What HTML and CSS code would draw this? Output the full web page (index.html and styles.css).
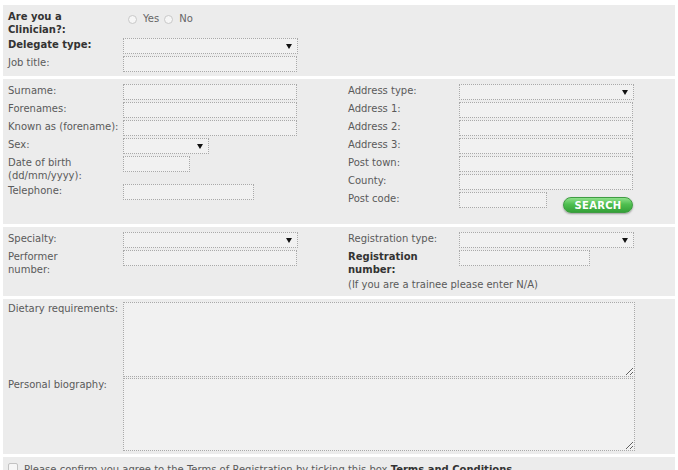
FILE: index.html
```html
<!DOCTYPE html>
<html lang="en">
<head>
    <meta charset="UTF-8">
    <meta name="viewport" content="width=device-width, initial-scale=1.0">
    <title>Delegate Registration</title>
    <link rel="stylesheet" href="styles.css">
</head>
<body>
    <form class="reg-form" id="registrationForm">

        <div class="panel panel-first">
            <div class="row">
                <span class="lbl strong">Are you a<br>Clinician?:</span>
                <div class="radios">
                    <input type="radio" name="clinician" id="clinYes" value="yes">
                    <label for="clinYes">Yes</label>
                    <input type="radio" name="clinician" id="clinNo" value="no">
                    <label for="clinNo">No</label>
                </div>
            </div>
            <div class="row">
                <label class="lbl strong" for="delegateType">Delegate type:</label>
                <span class="select-wrap w-sel"><select id="delegateType" name="delegateType"><option value=""></option></select></span>
            </div>
            <div class="row">
                <label class="lbl" for="jobTitle">Job title:</label>
                <input type="text" class="w-text" id="jobTitle" name="jobTitle">
            </div>
        </div>

        <div class="panel panel-split panel-person">
            <div class="col">
                <div class="row">
                    <label class="lbl" for="surname">Surname:</label>
                    <input type="text" class="w-text" id="surname" name="surname">
                </div>
                <div class="row">
                    <label class="lbl" for="forenames">Forenames:</label>
                    <input type="text" class="w-text" id="forenames" name="forenames">
                </div>
                <div class="row">
                    <label class="lbl" for="knownAs">Known as (forename):</label>
                    <input type="text" class="w-text" id="knownAs" name="knownAs">
                </div>
                <div class="row">
                    <label class="lbl" for="sex">Sex:</label>
                    <span class="select-wrap w-sex"><select id="sex" name="sex"><option value=""></option></select></span>
                </div>
                <div class="row">
                    <label class="lbl" for="dob">Date of birth<br>(dd/mm/yyyy):</label>
                    <input type="text" class="w-dob" id="dob" name="dob">
                </div>
                <div class="row">
                    <label class="lbl" for="telephone">Telephone:</label>
                    <input type="tel" class="w-mid" id="telephone" name="telephone">
                </div>
            </div>

            <div class="col col-right">
                <div class="row">
                    <label class="lbl" for="addressType">Address type:</label>
                    <span class="select-wrap w-sel"><select id="addressType" name="addressType"><option value=""></option></select></span>
                </div>
                <div class="row">
                    <label class="lbl" for="address1">Address 1:</label>
                    <input type="text" class="w-text" id="address1" name="address1">
                </div>
                <div class="row">
                    <label class="lbl" for="address2">Address 2:</label>
                    <input type="text" class="w-text" id="address2" name="address2">
                </div>
                <div class="row">
                    <label class="lbl" for="address3">Address 3:</label>
                    <input type="text" class="w-text" id="address3" name="address3">
                </div>
                <div class="row">
                    <label class="lbl" for="postTown">Post town:</label>
                    <input type="text" class="w-text" id="postTown" name="postTown">
                </div>
                <div class="row">
                    <label class="lbl" for="county">County:</label>
                    <input type="text" class="w-text" id="county" name="county">
                </div>
                <div class="row">
                    <label class="lbl" for="postCode">Post code:</label>
                    <input type="text" class="w-post" id="postCode" name="postCode">
                    <button type="button" class="btn-search">SEARCH</button>
                </div>
            </div>
        </div>

        <div class="panel panel-split panel-work">
            <div class="col">
                <div class="row">
                    <label class="lbl" for="specialty">Specialty:</label>
                    <span class="select-wrap w-sel"><select id="specialty" name="specialty"><option value=""></option></select></span>
                </div>
                <div class="row">
                    <label class="lbl" for="performer">Performer<br>number:</label>
                    <input type="text" class="w-text" id="performer" name="performer">
                </div>
            </div>

            <div class="col col-right">
                <div class="row">
                    <label class="lbl" for="regType">Registration type:</label>
                    <span class="select-wrap w-sel"><select id="regType" name="regType"><option value=""></option></select></span>
                </div>
                <div class="row">
                    <label class="lbl strong" for="regNumber">Registration<br>number:</label>
                    <input type="text" class="w-mid" id="regNumber" name="regNumber">
                </div>
                <p class="note">(If you are a trainee please enter N/A)</p>
            </div>
        </div>

        <div class="panel panel-notes">
            <div class="row row-area">
                <label class="lbl" for="dietary">Dietary requirements:</label>
                <textarea id="dietary" name="dietary" class="area-diet"></textarea>
            </div>
            <div class="row row-area">
                <label class="lbl" for="biography">Personal biography:</label>
                <textarea id="biography" name="biography" class="area-bio"></textarea>
            </div>
        </div>

        <div class="panel panel-terms">
            <input type="checkbox" id="terms" name="terms">
            <label for="terms">Please confirm you agree to the Terms of Registration by ticking this box <strong>Terms and Conditions</strong></label>
        </div>

    </form>
</body>
</html>
```

FILE: styles.css
```css
* {
    box-sizing: border-box;
}
body {
    margin: 0;
    padding-top: 5px;
    background: #fff;
    font-family: "DejaVu Sans", Verdana, sans-serif;
    font-size: 10px;
    line-height: 13px;
    color: #5a5a5a;
}
.reg-form {
    margin: 0;
}
.panel {
    background: #ececec;
    margin: 0 3px 3px;
    padding: 5px 5px 2px;
}
.panel-split {
    display: grid;
    grid-template-columns: 340px 1fr;
}
.panel-person {
    padding-bottom: 9px;
}
.panel-work {
    padding-bottom: 5px;
}
.panel-notes {
    padding: 3px 5px 2px;
}
.row {
    display: flex;
    align-items: flex-start;
    min-height: 16px;
    margin-bottom: 2px;
}
.lbl {
    flex: none;
    width: 115px;
    white-space: nowrap;
}
.col-right .lbl {
    width: 111px;
}
.strong {
    font-weight: bold;
    color: #333;
}

/* text fields */
input[type="text"],
input[type="tel"],
select,
textarea {
    height: 16px;
    margin: 0;
    padding: 0 3px;
    border: 1px dotted #a9a9a9;
    border-radius: 0;
    background: #f1f1f1;
    font-family: inherit;
    font-size: 10px;
    color: #333;
    outline: none;
}
.w-text { width: 174px; }
.w-mid { width: 131px; }
.w-dob { width: 67px; }
.w-post { width: 88px; }

.select-wrap {
    position: relative;
    display: block;
}
.select-wrap select {
    -webkit-appearance: none;
    appearance: none;
    display: block;
    width: 100%;
}
.select-wrap::after {
    content: "";
    position: absolute;
    right: 6px;
    top: 6px;
    border-left: 3px solid transparent;
    border-right: 3px solid transparent;
    border-top: 5px solid #111;
    pointer-events: none;
}
.w-sel { width: 175px; }
.w-sex { width: 86px; }

/* radios */
.radios {
    display: flex;
    align-items: center;
    padding-left: 5px;
    height: 13px;
    margin-top: 2px;
    color: #666;
}
.radios input {
    -webkit-appearance: none;
    appearance: none;
    width: 9px;
    height: 9px;
    margin: 1px 6px 0 0;
    border: 1px solid #c8c8c8;
    border-radius: 50%;
    background: #f6f6f6;
}
.radios label {
    margin-right: 5px;
}

.btn-search {
    width: 70px;
    height: 16px;
    margin: 5px 0 0 16px;
    padding: 0;
    border: 1px solid #3f9c42;
    border-radius: 8px;
    background: linear-gradient(#8ee08a, #4fbf50 45%, #34a138);
    box-shadow: 0 1px 2px rgba(0, 0, 0, 0.35);
    color: #fff;
    font-family: inherit;
    font-size: 10px;
    font-weight: bold;
    letter-spacing: 0.3px;
    cursor: pointer;
}

.note {
    margin: 0;
}

/* textareas */
.row-area {
    margin-bottom: 1px;
}
textarea {
    display: block;
    width: 512px;
    padding: 2px 3px;
    resize: both;
}
.area-diet { height: 75px; }
.area-bio { height: 73px; }

.panel-terms {
    display: flex;
    align-items: flex-start;
    padding: 6px 5px 6px;
    margin-bottom: 0;
}
.panel-terms input {
    -webkit-appearance: none;
    appearance: none;
    flex: none;
    width: 10px;
    height: 10px;
    margin: 0 6px 0 0;
    border: 1px solid #c2c2c2;
    border-radius: 2px;
    background: #f6f6f6;
}
.panel-terms strong {
    color: #333;
}
```
